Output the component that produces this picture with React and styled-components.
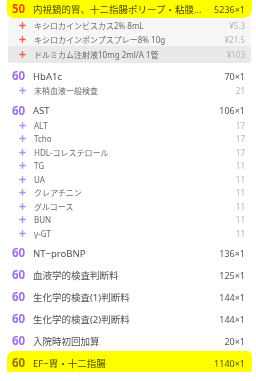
import React from 'react';
import styled, { createGlobalStyle, css } from 'styled-components';

const GlobalStyle = createGlobalStyle`
  html, body {
    margin: 0;
    padding: 0;
    background: #ffffff;
  }
  body {
    font-family: "Noto Sans", "Noto Sans CJK JP", sans-serif;
    -webkit-font-smoothing: antialiased;
  }
`;

const tones = {
  orange: { score: '#ee4f1c', plus: '#ef6437' },
  purple: { score: '#9d6fe4', plus: '#b08ef0' },
};

const List = styled.div`
  display: flex;
  flex-direction: column;
  gap: 4px;
  width: 243px;
  margin-left: 8px;
`;

const Group = styled.div`
  display: flex;
  flex-direction: column;
`;

const Header = styled.div`
  position: relative;
  display: flex;
  align-items: center;
  height: 18px;
  padding: 0 6px 0 4px;

  ${(p) =>
    p.$marked &&
    css`
      &::after {
        content: '';
        position: absolute;
        left: -1px;
        right: -1px;
        top: ${p.$top ? '-8px' : '-3px'};
        bottom: ${p.$top ? '0px' : '-4px'};
        background: #ffff00;
        border-radius: 7px 5px 8px 6px;
        mix-blend-mode: multiply;
        pointer-events: none;
      }
    `}
`;

const Score = styled.span`
  flex: 0 0 21px;
  font-size: 11.5px;
  font-weight: 700;
  color: ${(p) => tones[p.$tone].score};
  line-height: 1;
`;

const Title = styled.span`
  flex: 1;
  min-width: 0;
  font-size: 9.5px;
  color: #505050;
  white-space: nowrap;
  overflow: hidden;
  text-overflow: ellipsis;
  padding-right: 6px;
`;

const Points = styled.span`
  font-size: 9px;
  color: #555555;
  white-space: nowrap;
`;

const Items = styled.div`
  display: flex;
  flex-direction: column;
  margin-top: -1px;
  ${(p) =>
    p.$boxed &&
    css`
      margin-top: 0;
      padding-top: 1px;
      background: #f6f6f6;
      border-radius: 3px;
    `}
`;

const Item = styled.div`
  display: flex;
  align-items: center;
  height: ${(p) => (p.$active ? '17px' : p.$boxed ? '13.5px' : '13.5px')};
  padding: 0 6px 0 11px;
  border-radius: 3px;
  background: ${(p) => (p.$active ? '#e9e9e9' : 'transparent')};
`;

const PlusIcon = ({ color }) => (
  <svg width="7" height="7" viewBox="0 0 7 7" style={{ flex: '0 0 7px' }}>
    <path d="M3.5 0.3V6.7M0.3 3.5H6.7" stroke={color} strokeWidth="1.4" />
  </svg>
);

const ItemName = styled.span`
  flex: 1;
  margin-left: 8px;
  font-size: 8px;
  color: #6a6a6a;
  white-space: nowrap;
  overflow: hidden;
`;

const ItemValue = styled.span`
  font-size: 8px;
  color: #b3b3b3;
  white-space: nowrap;
`;

const groups = [
  {
    score: 50,
    tone: 'orange',
    title: '内視鏡的胃、十二指腸ポリープ・粘膜切除術（早期悪性腫瘍粘膜切除術）',
    points: '5236×1',
    marked: 'top',
    boxed: true,
    items: [
      ['キシロカインビスカス2% 8mL', '¥5.3'],
      ['キシロカインポンプスプレー8% 10g', '¥21.5'],
      ['ドルミカム注射液10mg 2ml/A 1管', '¥103', true],
    ],
  },
  { score: 60, tone: 'purple', title: 'HbA1c', points: '70×1', items: [['末梢血液一般検査', '21']] },
  {
    score: 60,
    tone: 'purple',
    title: 'AST',
    points: '106×1',
    items: [
      ['ALT', '17'],
      ['Tcho', '17'],
      ['HDL-コレステロール', '17'],
      ['TG', '11'],
      ['UA', '11'],
      ['クレアチニン', '11'],
      ['グルコース', '11'],
      ['BUN', '11'],
      ['γ-GT', '11'],
    ],
  },
  { score: 60, tone: 'purple', title: 'NT−proBNP', points: '136×1' },
  { score: 60, tone: 'purple', title: '血液学的検査判断料', points: '125×1' },
  { score: 60, tone: 'purple', title: '生化学的検査(1)判断料', points: '144×1' },
  { score: 60, tone: 'purple', title: '生化学的検査(2)判断料', points: '144×1' },
  { score: 60, tone: 'purple', title: '入院時初回加算', points: '20×1' },
  { score: 60, tone: 'purple', title: 'EF−胃・十二指腸', points: '1140×1', marked: 'row' },
];

export default function App() {
  return (
    <>
      <GlobalStyle />
      <List>
        {groups.map((g, i) => (
          <Group key={i}>
            <Header $marked={!!g.marked} $top={g.marked === 'top'}>
              <Score $tone={g.tone}>{g.score}</Score>
              <Title>{g.title}</Title>
              <Points>{g.points}</Points>
            </Header>
            {g.items && (
              <Items $boxed={g.boxed}>
                {g.items.map(([name, value, active], j) => (
                  <Item key={j} $active={active} $boxed={g.boxed}>
                    <PlusIcon color={tones[g.tone].plus} />
                    <ItemName>{name}</ItemName>
                    <ItemValue>{value}</ItemValue>
                  </Item>
                ))}
              </Items>
            )}
          </Group>
        ))}
      </List>
    </>
  );
}
